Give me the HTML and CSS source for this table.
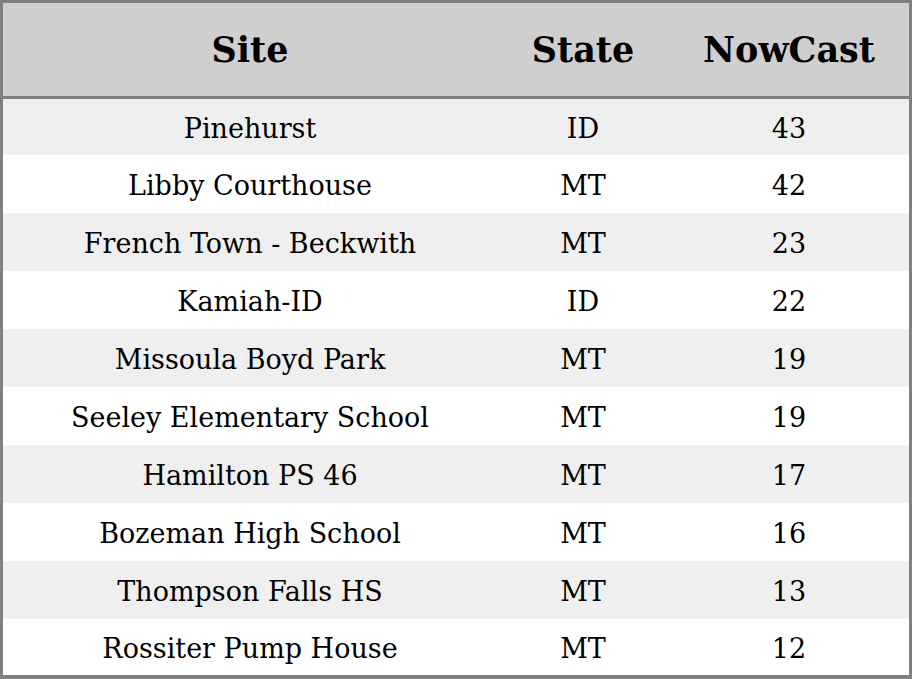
FILE: index.html
```html
<!DOCTYPE html>
<html>
<head>
<meta charset="utf-8">
<link rel="stylesheet" href="styles.css">
</head>
<body>
<table class="aq">
  <colgroup>
    <col class="c-site">
    <col class="c-state">
    <col class="c-now">
  </colgroup>
  <thead>
    <tr><th>Site</th><th>State</th><th>NowCast</th></tr>
  </thead>
  <tbody>
    <tr><td>Pinehurst</td><td>ID</td><td>43</td></tr>
    <tr><td>Libby Courthouse</td><td>MT</td><td>42</td></tr>
    <tr><td>French Town - Beckwith</td><td>MT</td><td>23</td></tr>
    <tr><td>Kamiah-ID</td><td>ID</td><td>22</td></tr>
    <tr><td>Missoula Boyd Park</td><td>MT</td><td>19</td></tr>
    <tr><td>Seeley Elementary School</td><td>MT</td><td>19</td></tr>
    <tr><td>Hamilton PS 46</td><td>MT</td><td>17</td></tr>
    <tr><td>Bozeman High School</td><td>MT</td><td>16</td></tr>
    <tr><td>Thompson Falls HS</td><td>MT</td><td>13</td></tr>
    <tr><td>Rossiter Pump House</td><td>MT</td><td>12</td></tr>
  </tbody>
</table>
</body>
</html>
```
FILE: styles.css
```css
html, body {
  margin: 0;
  padding: 0;
  background: #ffffff;
}
.aq {
  width: 912px;
  border-collapse: separate;
  border-spacing: 0;
  table-layout: fixed;
  border-top: 3px solid #808080;
  border-left: 3px solid #808080;
  border-right: 3px solid #808080;
  border-bottom: 4px solid #808080;
  font-family: "DejaVu Serif", serif;
  color: #000;
  box-sizing: border-box;
}
.c-site { width: 494px; }
.c-state { width: 172px; }
.c-now { width: 240px; }
.aq th {
  background: #cfcfcf;
  height: 93px;
  padding: 0;
  font-size: 35px;
  line-height: 40px;
  font-weight: bold;
  text-align: center;
  border-bottom: 3px solid #808080;
}
.aq td {
  height: 54px;
  padding: 4px 0 0 0;
  font-size: 27px;
  line-height: 32px;
  text-align: center;
}
.aq tbody tr:first-child td,
.aq tbody tr:last-child td {
  height: 52px;
}
.aq tbody tr:nth-child(odd) td {
  background: #efefef;
}
.aq tbody tr:nth-child(even) td {
  background: #ffffff;
}
```
